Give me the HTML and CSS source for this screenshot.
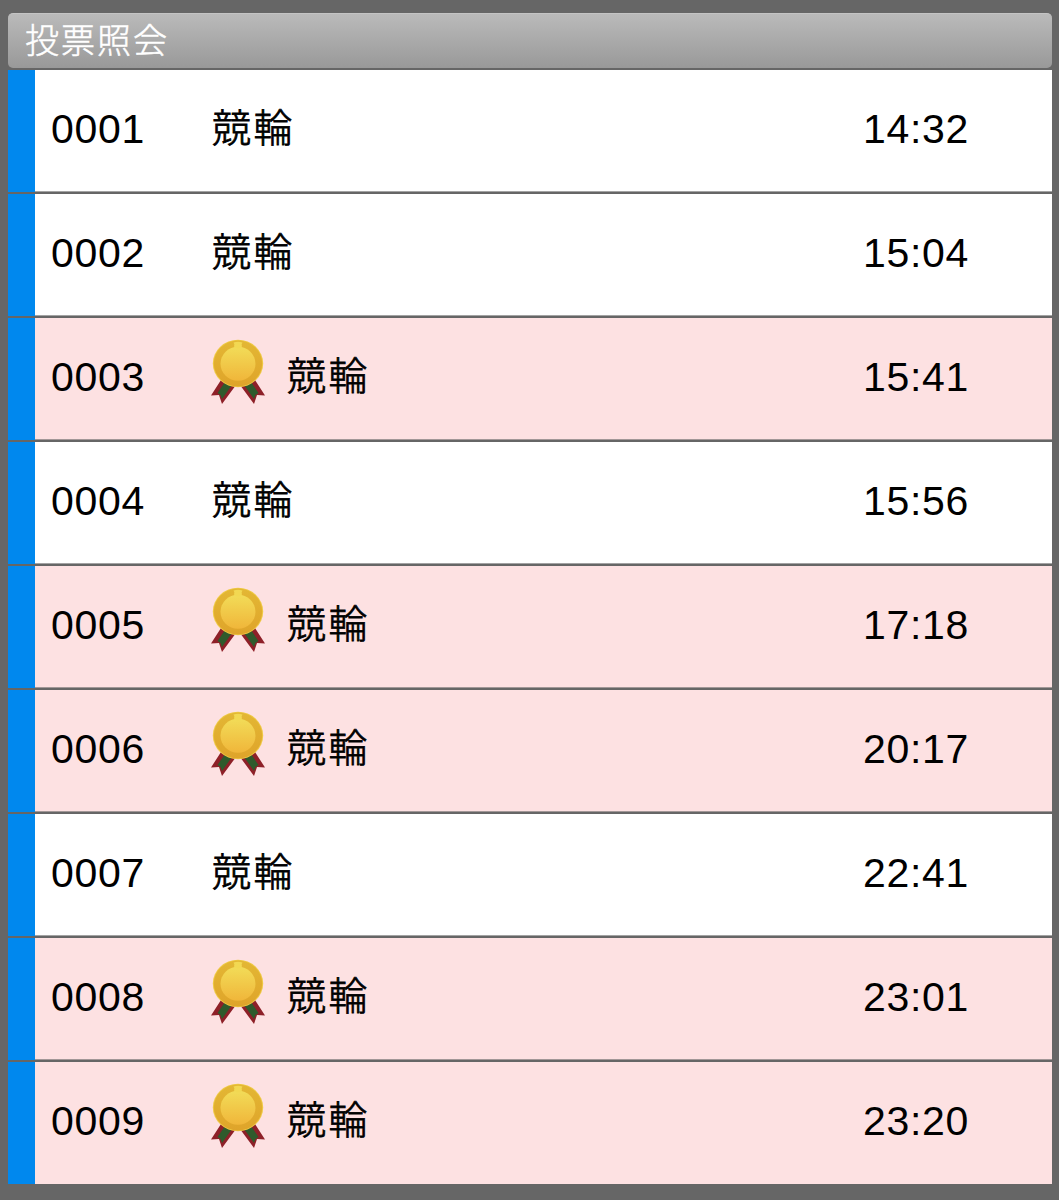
FILE: index.html
```html
<!DOCTYPE html>
<html lang="ja">
<head>
  <meta charset="UTF-8" />
  <meta name="viewport" content="width=device-width, initial-scale=1.0" />
  <title>投票照会</title>
  <link rel="stylesheet" href="styles.css">
</head>
<body>
  <!-- メダルアイコン(的中行で使う) -->
  <svg class="defs" width="0" height="0">
    <defs>
      <linearGradient id="gold" x1="0" y1="0" x2="0" y2="1">
        <stop offset="0" stop-color="#f2dc58" />
        <stop offset="1" stop-color="#f0b63a" />
      </linearGradient>
      <linearGradient id="rim" x1="0" y1="0" x2="0" y2="1">
        <stop offset="0" stop-color="#e3b734" />
        <stop offset="1" stop-color="#dfa42a" />
      </linearGradient>
      <symbol id="medal" viewBox="0 0 54 66">
        <path d="M10 41L0 56.500L8 56L11 65L25 46Z" fill="#8e2028" />
        <path d="M14 43L6.500 54L9.500 56L11 60L21 46Z" fill="#2f5a2c" />
        <path d="M44 41L54 56.500L46 56L43 65L29 46Z" fill="#8e2028" />
        <path d="M40 43L47.500 54L44.500 56L43 60L33 46Z" fill="#2f5a2c" />
        <ellipse cx="27" cy="24.500" rx="25.200" ry="23.800" fill="#efca45" />
        <ellipse cx="27" cy="24.500" rx="24.200" ry="22.900" fill="url(#rim)" />
        <ellipse cx="27" cy="24.700" rx="17.500" ry="17" fill="url(#gold)" />
        <path d="M22.500 3.500Q27 2 31.500 3.500Q30 5 31 7.500Q29 9.500 27 9.500Q25 9.500 23 7.500Q24 5 22.500 3.500Z" fill="#f2d852" />
      </symbol>
    </defs>
  </svg>

  <div class="container">
    <h1 class="title">投票照会</h1>
    <ul class="list">
      <li class="row">
        <span class="number">0001</span>
        <span class="race">競輪</span>
        <span class="time">14:32</span>
      </li>
      <li class="row">
        <span class="number">0002</span>
        <span class="race">競輪</span>
        <span class="time">15:04</span>
      </li>
      <li class="row hit">
        <span class="number">0003</span>
        <svg class="medal"><use href="#medal" /></svg>
        <span class="race">競輪</span>
        <span class="time">15:41</span>
      </li>
      <li class="row">
        <span class="number">0004</span>
        <span class="race">競輪</span>
        <span class="time">15:56</span>
      </li>
      <li class="row hit">
        <span class="number">0005</span>
        <svg class="medal"><use href="#medal" /></svg>
        <span class="race">競輪</span>
        <span class="time">17:18</span>
      </li>
      <li class="row hit">
        <span class="number">0006</span>
        <svg class="medal"><use href="#medal" /></svg>
        <span class="race">競輪</span>
        <span class="time">20:17</span>
      </li>
      <li class="row">
        <span class="number">0007</span>
        <span class="race">競輪</span>
        <span class="time">22:41</span>
      </li>
      <li class="row hit">
        <span class="number">0008</span>
        <svg class="medal"><use href="#medal" /></svg>
        <span class="race">競輪</span>
        <span class="time">23:01</span>
      </li>
      <li class="row hit">
        <span class="number">0009</span>
        <svg class="medal"><use href="#medal" /></svg>
        <span class="race">競輪</span>
        <span class="time">23:20</span>
      </li>
    </ul>
  </div>
</body>
</html>
```
FILE: styles.css
```css
* {
  box-sizing: border-box;
}
body {
  margin: 0;
  background: #666;
  color: #000;
  font-family: "Liberation Sans", "Noto Sans CJK JP", sans-serif;
}
.defs {
  display: block;
}
.container {
  padding: 13px 7px 16px 8px;
}
/* 見出し */
.title {
  height: 55px;
  margin: 0 0 2px;
  padding-left: 17px;
  border-top: 1px solid #c4c4c4;
  border-radius: 5px;
  background: linear-gradient(#bababa, #999);
  color: #fff;
  font-family: "Noto Sans CJK JP", sans-serif;
  font-size: 34px;
  font-weight: 300;
  letter-spacing: 2px;
  line-height: 49px;
  -webkit-text-stroke: 0.5px #fff;
}
/* 一覧 */
.list {
  margin: 0;
  padding: 0;
  list-style: none;
  display: flex;
  flex-direction: column;
  gap: 2px;
}
.row {
  display: flex;
  align-items: center;
  height: 122px;
  padding: 0 83px 0 16px;
  border-left: 27px solid #0088ee;
  background: #fff;
  font-size: 41px;
}
.row.hit {
  background: #fde1e2;
}
/* 区切り線を少し太く見せる */
.row:not(:last-child) {
  box-shadow: inset 0 -1px rgba(102, 102, 102, 0.6);
}
.number {
  width: 161px;
  letter-spacing: 0.7px;
  line-height: 48px;
  padding-bottom: 5px;
}
.medal {
  width: 54px;
  height: 66px;
  margin-left: -1px;
  margin-right: 22px;
  margin-bottom: 14px;
}
.race {
  padding-bottom: 12px;
  font-family: "Noto Sans CJK JP", sans-serif;
  font-size: 39px;
  font-weight: 300;
  letter-spacing: 2.5px;
  line-height: 60px;
  -webkit-text-stroke: 0.8px #000;
}
.time {
  margin-left: auto;
  letter-spacing: 0.7px;
  line-height: 48px;
  padding-bottom: 5px;
}
```
